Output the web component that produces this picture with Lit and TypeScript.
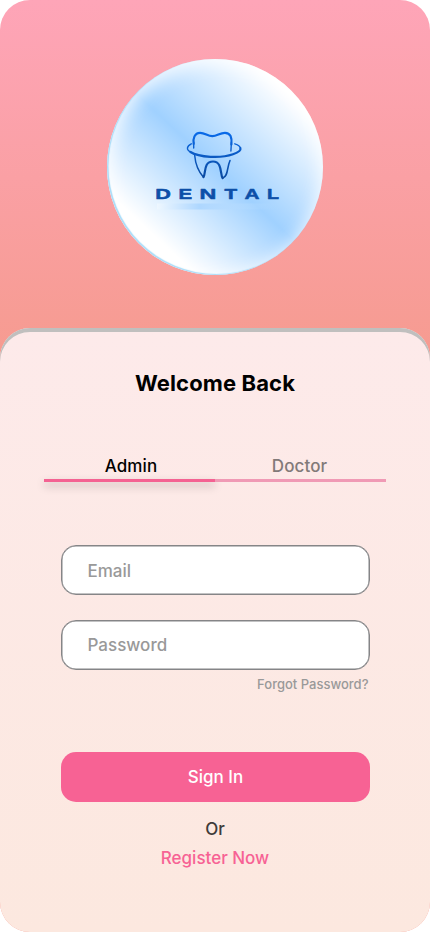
import { LitElement, html, css, svg } from "lit";
import { customElement, state } from "lit/decorators.js";

const LETTERS: [string, number, number][] = [
  ["D", 155.2, 15.6],
  ["E", 178.6, 13.6],
  ["N", 199.6, 16.8],
  ["T", 224.6, 12.6],
  ["A", 244.4, 15],
  ["L", 267, 12],
];

@customElement("dental-logo")
export class DentalLogo extends LitElement {
  static styles = css`
    :host { display: block; }
    .disc {
      width: 216px;
      height: 216px;
      border-radius: 50%;
      overflow: hidden;
      background: linear-gradient(43deg, #fff 20%, #a0d1ff 50%, #fff 84%);
      box-shadow: inset 1.5px -1px 1px #a9dcf8, inset 1px 3px 18px 2px #ffffffd0;
    }
    .art { display: block; width: 216px; height: 216px; }
    .word { font: 700 14.6px "Liberation Sans", Arial, sans-serif; fill: #0d4fa8; stroke: #0d4fa8; stroke-width: 0.5; }
  `;

  render() {
    return html`<div class="disc">
      <svg class="art" viewBox="107 58.5 216 216" fill="none" stroke-linecap="round" stroke-linejoin="round">
        <defs>
          <linearGradient id="ink" gradientUnits="userSpaceOnUse" x1="0" y1="131" x2="0" y2="180">
            <stop offset="0" stop-color="#0a6bea" />
            <stop offset="1" stop-color="#0b489c" />
          </linearGradient>
          <linearGradient id="strip" x1="0" x2="1" y1="0" y2="0">
            <stop offset="0" stop-color="#eef7ff" />
            <stop offset="0.35" stop-color="#aed7ff" />
            <stop offset="1" stop-color="#bcdfff" stop-opacity="0" />
          </linearGradient>
        </defs>
        <rect x="157" y="203" width="121" height="6" fill="url(#strip)" />
        <g stroke="url(#ink)">
          <path stroke-width="2.2" d="M193.7 143.5 C192.8 138 194.5 132.4 200 132.3 C205 132.2 207.5 135.7 212.3 135.7 C217 135.7 220 132.2 225 132.3 C230.5 132.4 232.2 137 231.4 144" />
          <path stroke-width="1.4" d="M193.7 142 V147.5 M231.4 142 L230.9 150.5" />
          <path stroke-width="1.4" d="M191.3 143.3 C187 145.5 185.5 149 191 151.8" />
          <path stroke-width="2.2" d="M190.5 151.5 C199 157 221 158 233 153.8 C239.5 151.5 241 149.5 240.4 147.6" />
          <path stroke-width="1.4" d="M240.4 147.8 C240.3 146 238 144.3 234.8 143.3" />
          <path stroke-width="1.5" d="M194.7 155 C195.5 164 198.5 171 203.3 176.4" />
          <path stroke-width="2.2" d="M203.5 176.5 C206 173 203.2 161 213 161 C222.6 161 220 174 222.6 177.6" />
          <path stroke-width="1.6" d="M222.8 177.6 C228.5 175.5 226.5 168 230 160" />
        </g>
        ${LETTERS.map(
          ([ch, x, w]) => svg`<text class="word" x=${x} y="198.7" textLength=${w} lengthAdjust="spacingAndGlyphs">${ch}</text>`,
        )}
      </svg>
    </div>`;
  }
}

@customElement("app-root")
export class AppRoot extends LitElement {
  @state() private role = "Admin";

  static styles = css`
    :host { display: block; background: #fff; font-family: Inter, sans-serif; }
    * { box-sizing: border-box; }
    .screen {
      width: 430px;
      height: 932px;
      border-radius: 30px;
      overflow: hidden;
      display: flex;
      flex-direction: column;
      background: linear-gradient(180deg, #fea5b8 0, #f69b90 356px);
    }
    .hero { height: 328px; flex: none; display: flex; justify-content: center; padding-top: 58.5px; }
    .sheet {
      flex: 1;
      border-radius: 30px 30px 0 0;
      background: linear-gradient(180deg, #fdeaea 0, #fce8df 100%);
      box-shadow: inset 0 4px 0 #c0bfbe;
      display: flex;
      flex-direction: column;
      align-items: center;
    }
    h1 { margin: 41px 0 0; font-size: 22px; line-height: 28px; font-weight: 700; letter-spacing: 0.12px; color: #000; }
    .tabs { display: grid; grid-template-columns: 171px 171px; margin-top: 56px; }
    .tab {
      height: 29px;
      padding: 0 0 3px 3px;
      border: 0;
      border-bottom: 3px solid #f09ab5;
      background: none;
      color: #827a79;
      font: 450 17px/26px Inter, sans-serif;
      letter-spacing: 0.1px;
      text-align: center;
      position: relative;
    }
    .tab:last-child { padding: 0 2px 3px 0; }
    .tab.on { color: #000; border-color: #f46292; }
    .tab.on::after {
      content: "";
      position: absolute;
      left: 0;
      right: 0;
      bottom: -3px;
      height: 3px;
      background: #f46292;
      box-shadow: 0 4px 8px #00000045;
    }
    form { width: 309px; display: flex; flex-direction: column; margin-top: 63px; }
    input {
      height: 50px;
      width: 309px;
      border: 1px solid #858587;
      box-shadow: inset 0 0 0 0.5px #858587;
      border-radius: 15px;
      background: #fff;
      padding: 1px 26px 0;
      font: 450 17px Inter, sans-serif;
      outline: none;
    }
    input::placeholder { color: #999; opacity: 1; }
    .password { margin-top: 25px; padding-top: 0; }
    .forgot { align-self: flex-end; margin: 5px 1px 0 0; font-size: 13px; line-height: 18px; font-weight: 450; color: #999; }
    .submit {
      height: 50px;
      margin-top: 59px;
      border: 0;
      border-radius: 15px;
      background: #f76294;
      color: #fff;
      font: 450 17px Inter, sans-serif;
      padding: 0 0 0 1px;
    }
    .or { margin-top: 16px; font-size: 17px; line-height: 22px; font-weight: 450; color: #3f3b3a; }
    .register { margin-top: 7px; font-size: 17px; line-height: 22px; font-weight: 450; color: #f76294; }
  `;

  render() {
    return html`<main class="screen">
      <div class="hero"><dental-logo></dental-logo></div>
      <section class="sheet">
        <h1>Welcome Back</h1>
        <nav class="tabs">
          ${["Admin", "Doctor"].map(
            (name) => html`<button class="tab ${this.role === name ? "on" : ""}" @click=${() => (this.role = name)}>${name}</button>`,
          )}
        </nav>
        <form @submit=${(e: Event) => e.preventDefault()}>
          <input type="email" placeholder="Email" />
          <input class="password" type="password" placeholder="Password" />
          <span class="forgot">Forgot Password?</span>
          <button class="submit">Sign In</button>
        </form>
        <span class="or">Or</span>
        <span class="register">Register Now</span>
      </section>
    </main>`;
  }
}
